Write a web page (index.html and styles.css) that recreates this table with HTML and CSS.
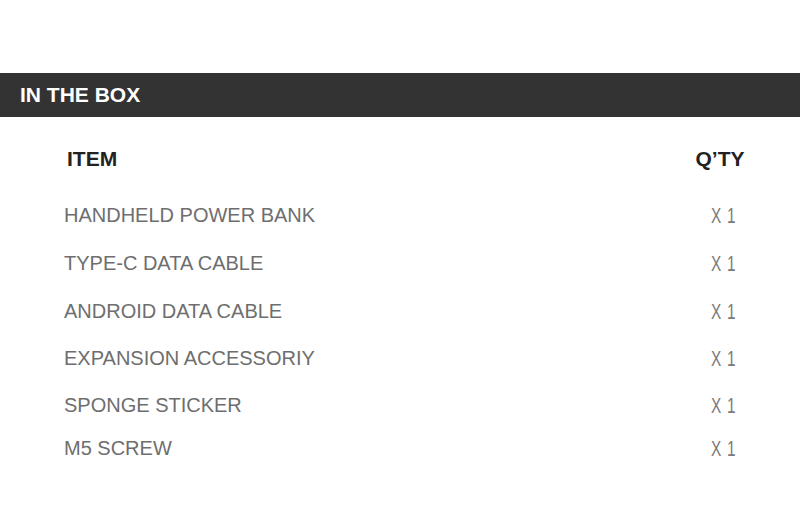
FILE: index.html
```html
<!DOCTYPE html>
<html>
<head>
<meta charset="utf-8">
<link rel="stylesheet" href="styles.css">
</head>
<body>
<div class="page">
  <div class="bar"><h1 class="bar-title">IN THE BOX</h1></div>
  <div class="table">
    <div class="th th-item">ITEM</div>
    <div class="th th-qty">Q’TY</div>

    <div class="item">HANDHELD POWER BANK</div>
    <div class="qty"><span class="qty-text">X 1</span></div>

    <div class="item">TYPE-C DATA CABLE</div>
    <div class="qty"><span class="qty-text">X 1</span></div>

    <div class="item">ANDROID DATA CABLE</div>
    <div class="qty"><span class="qty-text">X 1</span></div>

    <div class="item">EXPANSION ACCESSORIY</div>
    <div class="qty"><span class="qty-text">X 1</span></div>

    <div class="item">SPONGE STICKER</div>
    <div class="qty"><span class="qty-text">X 1</span></div>

    <div class="item">M5 SCREW</div>
    <div class="qty"><span class="qty-text">X 1</span></div>
  </div>
</div>
</body>
</html>
```

FILE: styles.css
```css
* { box-sizing: border-box; }
html, body {
  margin: 0;
  padding: 0;
  background: #ffffff;
}
body {
  width: 800px;
  height: 528px;
  overflow: hidden;
  font-family: "Liberation Sans", Arial, sans-serif;
}
.page {
  padding-top: 73px;
}
.bar {
  height: 44px;
  background: #333333;
  display: flex;
  align-items: center;
  padding-left: 20px;
}
.bar-title {
  margin: 0;
  font-size: 21px;
  line-height: 24px;
  font-weight: bold;
  color: #ffffff;
}
.table {
  display: grid;
  grid-template-columns: 1fr 60px;
  grid-template-rows: 56px 48px 48px 47px 47px 43px 24px;
  padding: 30px 50px 0 64px;
}
.th {
  font-size: 21px;
  line-height: 24px;
  font-weight: bold;
  color: #222222;
}
.th-item {
  padding-left: 3px;
}
.th-qty {
  text-align: center;
}
.item {
  font-size: 20px;
  line-height: 24px;
  color: #6e6e6e;
}
.qty {
  padding-left: 21px;
  font-size: 22px;
  line-height: 24px;
  color: #7a7a7a;
}
.qty-text {
  display: inline-block;
  white-space: nowrap;
  word-spacing: 2px;
  transform: scaleX(0.7);
  transform-origin: left center;
  position: relative;
  top: 1px;
}
```
